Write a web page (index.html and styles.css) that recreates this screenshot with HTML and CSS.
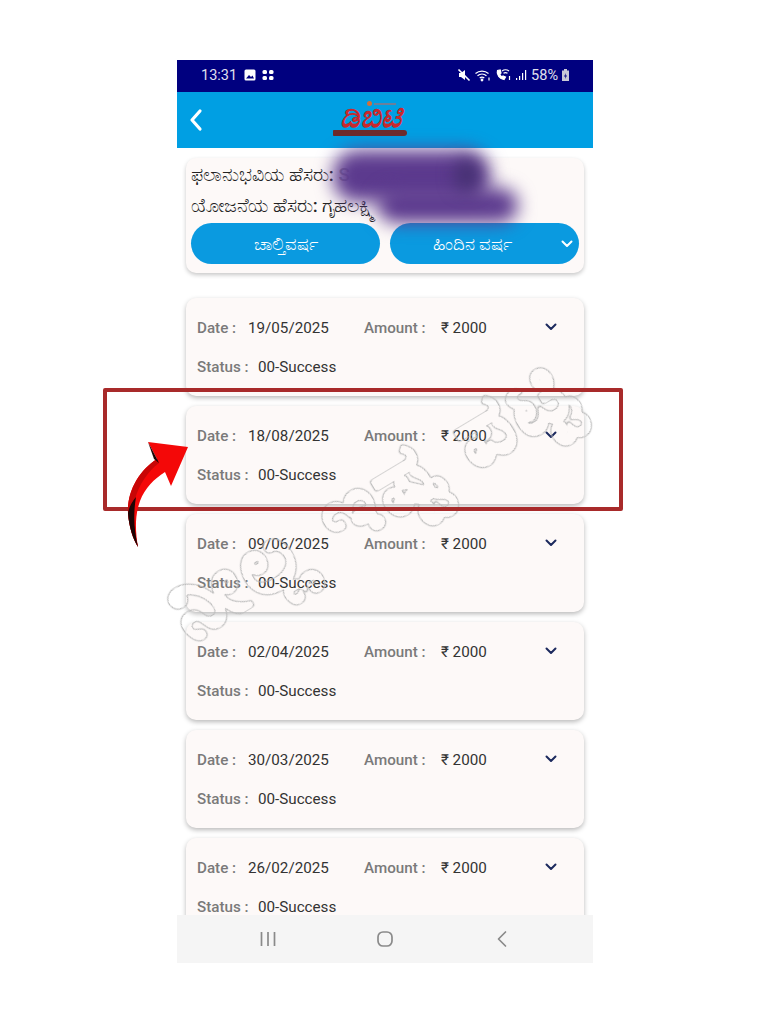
FILE: index.html
```html
<!DOCTYPE html>
<html lang="kn">
<head>
  <meta charset="UTF-8">
  <meta name="viewport" content="width=device-width, initial-scale=1.0">
  <title>DBT</title>
  <link rel="stylesheet" href="styles.css">
</head>
<body>
  <div class="phone">
    <div class="status-bar">
      <div class="status-left">
        <span>13:31</span>
        <svg class="status-icon" viewBox="0 0 14 14"><rect x="1.500" y="1.500" width="11" height="11" rx="1.500" fill="#fff"/><path d="M3 10.500 6 7l2 2 1.500-1.500 1.500 3z" fill="#00007f"/></svg>
        <svg class="status-icon" viewBox="0 0 14 14" fill="#fff"><rect x="1.500" y="2" width="4.500" height="4" rx="1.500"/><rect x="8" y="2" width="4.500" height="4" rx="1.500"/><rect x="1.500" y="8" width="4.500" height="4" rx="1.500"/><rect x="8" y="8" width="4.500" height="4" rx="1.500"/></svg>
      </div>
      <div class="status-right">
        <svg class="status-icon" viewBox="0 0 14 14"><path d="M2 5v4h2l4 3V2L4 5z" fill="#fff"/><path d="M1.500 1.500 12.500 12.500" stroke="#fff" stroke-width="1.600"/></svg>
        <svg class="status-icon wide" viewBox="0 0 18 14" fill="none" stroke="#fff" stroke-width="1.200"><path d="M1.500 5.500a10 10 0 0 1 13 0M3.500 7.800a7 7 0 0 1 9 0M5.700 10a3.600 3.600 0 0 1 4.600 0"/><circle cx="8" cy="12" r=".8" fill="#fff"/><path d="M15 9.500v3"/></svg>
        <svg class="status-icon wide" viewBox="0 0 18 14" fill="none" stroke="#fff" stroke-width="1.200"><path d="M2.500 2.500c-1.500 4 2.500 8.500 6.500 9l1.500-2.500-2.500-1-1 1c-1-.5-2-2-2.300-3l1.300-1-.8-3z" fill="#fff"/><path d="M7 3a6 6 0 0 1 7 0M8.500 5.300a3.500 3.500 0 0 1 4 0M14.500 8v4"/></svg>
        <svg class="status-icon signal" viewBox="0 0 12 14" fill="#fff"><rect x="0" y="10" width="1.200" height="2"/><rect x="3" y="8" width="1.200" height="4"/><rect x="6" y="5" width="1.200" height="7"/><rect x="9" y="2" width="1.200" height="10"/></svg>
        <span>58%</span>
        <svg class="status-icon battery" viewBox="0 0 9 14"><path d="M3 1h3v1.500h2v10.500H1V2.500h2z" fill="#c9c9d6"/><path d="M5 5 3 8.500h1.500L4 11l2-3.500H4.500z" fill="#00007f"/></svg>
      </div>
    </div>

    <header class="app-bar">
      <svg class="back-icon" viewBox="0 0 14 24" fill="none" stroke="#fff" stroke-width="3.200" stroke-linecap="round" stroke-linejoin="round"><path d="M11 3 3 12l8 9"/></svg>
      <div class="logo">
        <div class="logo-top"><span class="logo-dot"></span><span class="logo-line"></span></div>
        <span class="logo-mark">ಡಿಬಿಟಿ</span>
        <span class="logo-tag"></span>
      </div>
    </header>

    <main class="content">
      <section class="info-card">
        <p class="info-line">ಫಲಾನುಭವಿಯ ಹೆಸರು: <span class="info-hidden">S</span></p>
        <p class="info-line">ಯೋಜನೆಯ ಹೆಸರು: ಗೃಹಲಕ್ಷ್ಮಿ</p>
        <div class="year-buttons">
          <button class="year-button">ಚಾಲ್ತಿವರ್ಷ</button>
          <button class="year-button year-button-menu">ಹಿಂದಿನ ವರ್ಷ
            <svg class="year-chevron" viewBox="0 0 12 8" fill="none" stroke="#fff" stroke-width="2" stroke-linecap="round" stroke-linejoin="round"><path d="M1.500 1.500 6 6l4.500-4.500"/></svg>
          </button>
        </div>
      </section>

      <div class="payments" id="payments"></div>
    </main>

    <nav class="nav-bar">
      <svg class="nav-icon" viewBox="0 0 20 18" fill="none" stroke="#8a8a8a" stroke-width="1.700"><path d="M3.500 2v14M10 2v14M16.500 2v14"/></svg>
      <svg class="nav-icon" viewBox="0 0 20 18" fill="none" stroke="#8a8a8a" stroke-width="1.700"><rect x="3" y="2" width="14" height="14" rx="5"/></svg>
      <svg class="nav-icon" viewBox="0 0 20 18" fill="none" stroke="#8a8a8a" stroke-width="1.700" stroke-linecap="round" stroke-linejoin="round"><path d="M13.500 2 6.500 9l7 7"/></svg>
    </nav>
  </div>

  <!-- things drawn on top of the screenshot -->
  <div class="smear smear-top"></div>
  <div class="smear smear-bottom"></div>
  <div class="smear smear-dark"></div>

  <svg class="filter-defs" aria-hidden="true">
    <filter id="wm-outline" x="-10%" y="-40%" width="120%" height="180%">
      <feGaussianBlur in="SourceAlpha" stdDeviation="1.200"/>
      <feComponentTransfer result="ring">
        <feFuncA type="table" tableValues="0 .5 1 1 .5 0 0 0 0 0 0 0 0 0 0 0"/>
      </feComponentTransfer>
      <feFlood flood-color="#bcbcbc"/>
      <feComposite in2="ring" operator="in"/>
    </filter>
  </svg>
  <div class="watermark">ನೀಲ್ಲ ಇಷ್ಟ ಪಟ್ಟಿ</div>

  <div class="highlight-box"></div>
  <svg class="red-arrow" viewBox="0 0 72 116">
    <path d="M68 12 28 7 37 24C20 35 7 55 8 78 9 92 13 104 18 112 15 95 15 80 20 66 25 53 34 44 45 37L51 51Z" fill="#f40808"/>
    <path d="M37 24C20 35 7 55 8 78 9 92 13 104 18 112 14 95 12 78 15 64 19 50 27 37 39 28Z" fill="#c80606"/>
    <path d="M8 78C9 92 13 104 18 112 14 95 13 80 16 62 12 67 9 72 8 78Z" fill="#1c0404"/>
    <path d="M28 7 37 24 39 28 34 24Z" fill="#1c0404"/>
  </svg>

  <script src="payments.js"></script>
</body>
</html>
```

FILE: styles.css
```css
html, body {
    margin: 0;
    padding: 0;
    background-color: #fff;
    font-family: Roboto, "Noto Sans", sans-serif;
    color: #333;
}

body {
    position: relative;
    height: 1024px;
    padding: 60px 0 0 177px;
    box-sizing: border-box;
    overflow: hidden;
}

.phone {
    display: flex;
    flex-direction: column;
    width: 416px;
    height: 903px;
    background-color: #fff;
}

/* Status bar */
.status-bar {
    display: flex;
    justify-content: space-between;
    align-items: center;
    height: 32px;
    padding: 0 23px 2px 24px;
    box-sizing: border-box;
    background-color: #00007f;
    color: #e0e0ee;
    font-size: 14.500px;
}

.status-left, .status-right {
    display: flex;
    align-items: center;
    gap: 4px;
}

.status-left span {
    margin-right: 2px;
}

.status-right {
    gap: 3px;
}

.status-icon {
    width: 14px;
    height: 14px;
}

.status-icon.wide {
    width: 18px;
}

.status-icon.signal {
    width: 12px;
}

.status-icon.battery {
    width: 9px;
}

/* App bar */
.app-bar {
    position: relative;
    display: flex;
    justify-content: center;
    align-items: flex-start;
    height: 56px;
    background-color: #009fe3;
}

.back-icon {
    position: absolute;
    left: 12px;
    top: 16px;
    width: 14px;
    height: 24px;
}

.logo {
    display: flex;
    flex-direction: column;
    align-items: center;
    width: 76px;
    margin: 9px 30px 0 0;
}

.logo-top {
    display: flex;
    align-items: center;
    gap: 2px;
    height: 5px;
    margin-left: 22px;
}

.logo-dot {
    width: 5px;
    height: 5px;
    border-radius: 50%;
    background-color: #d0703a;
}

.logo-line {
    width: 22px;
    height: 2px;
    background-color: #6c7f99;
}

.logo-mark {
    height: 24px;
    color: #c8282d;
    font-size: 31px;
    font-weight: 700;
    font-style: italic;
    line-height: 22px;
    white-space: nowrap;
}

.logo-tag {
    width: 74px;
    height: 6px;
    background-color: #6d2b2b;
    border-radius: 1px 4px 4px 1px;
}

/* Content */
.content {
    flex: 1;
    overflow: hidden;
    padding: 10px 9px 0;
    background-color: #fff;
}

.info-card {
    height: 115px;
    padding: 4px 5px 0;
    box-sizing: border-box;
    background-color: #fdf9f8;
    border-radius: 10px;
    box-shadow: 0 2px 4px rgba(0, 0, 0, 0.22);
}

.info-line {
    margin: 0;
    height: 30.500px;
    line-height: 26px;
    font-size: 19px;
    font-weight: 500;
    color: #222;
    white-space: nowrap;
}

.info-hidden {
    color: #999;
}

.year-buttons {
    display: grid;
    grid-template-columns: 1fr 1fr;
    gap: 10px;
}

.year-button {
    position: relative;
    height: 41px;
    padding: 0;
    box-sizing: border-box;
    border: none;
    border-radius: 21px;
    background-color: #0a9ae0;
    color: #fff;
    font-family: inherit;
    font-size: 18px;
}

.year-button-menu {
    padding-right: 24px;
}

.year-chevron {
    position: absolute;
    right: 6px;
    top: 17px;
    width: 12px;
    height: 8px;
}

.payments {
    display: flex;
    flex-direction: column;
    gap: 10px;
    margin-top: 25px;
}

.payment-card {
    flex-shrink: 0;
    position: relative;
    display: flex;
    flex-direction: column;
    gap: 19px;
    height: 98px;
    padding: 20px 11px 0;
    box-sizing: border-box;
    background-color: #fdf9f8;
    border-radius: 10px;
    box-shadow: 0 2px 5px rgba(0, 0, 0, 0.28);
    font-size: 15.200px;
    line-height: 20px;
}

.payment-row {
    display: flex;
}

.field-label {
    color: #7a7a7a;
    font-weight: 500;
}

.date-label {
    width: 51px;
}

.status-label {
    width: 61px;
}

.date-value {
    width: 116px;
}

.amount-label {
    width: 77px;
}

.payment-chevron {
    position: absolute;
    right: 27px;
    top: 25px;
    width: 12px;
    height: 8px;
}

/* Nav bar */
.nav-bar {
    display: flex;
    justify-content: space-around;
    align-items: center;
    height: 48px;
    padding: 0 33px;
    background-color: #f5f5f5;
}

.nav-icon {
    width: 20px;
    height: 18px;
}

/* Overlays */
.smear {
    position: absolute;
    background-color: #5c3a8e;
    filter: blur(9px);
    border-radius: 24px;
}

.smear-top {
    left: 333px;
    top: 150px;
    width: 157px;
    height: 52px;
}

.smear-bottom {
    left: 378px;
    top: 188px;
    width: 140px;
    height: 35px;
}

.smear-dark {
    left: 456px;
    top: 160px;
    width: 22px;
    height: 30px;
    background-color: #43306e;
}

.filter-defs {
    position: absolute;
    width: 0;
    height: 0;
}

.watermark {
    position: absolute;
    left: 142px;
    top: 448px;
    transform: rotate(-31deg);
    color: #000;
    -webkit-text-stroke: 1.500px #000;
    font-size: 86px;
    font-weight: 700;
    letter-spacing: 5px;
    line-height: 100px;
    white-space: nowrap;
    filter: url(#wm-outline);
}

.highlight-box {
    position: absolute;
    left: 103px;
    top: 388px;
    width: 512px;
    height: 115px;
    border: 4px solid #a82a2a;
    border-radius: 2px;
}

.red-arrow {
    position: absolute;
    left: 120px;
    top: 435px;
    width: 72px;
    height: 116px;
}
```

FILE: payments.js
```js
const payments = ["19/05/2025", "18/08/2025", "09/06/2025", "02/04/2025", "30/03/2025", "26/02/2025"];

const list = document.getElementById("payments");

list.innerHTML = payments.map(date => `
  <div class="payment-card">
    <div class="payment-row">
      <span class="field-label date-label">Date :</span>
      <span class="date-value">${date}</span>
      <span class="field-label amount-label">Amount :</span>
      <span>₹ 2000</span>
    </div>
    <div class="payment-row">
      <span class="field-label status-label">Status :</span>
      <span>00-Success</span>
    </div>
    <svg class="payment-chevron" viewBox="0 0 12 8" fill="none" stroke="#1c2a5e" stroke-width="2" stroke-linecap="round" stroke-linejoin="round"><path d="M1.500 1.500 6 6l4.500-4.500"/></svg>
  </div>`).join("");
```
